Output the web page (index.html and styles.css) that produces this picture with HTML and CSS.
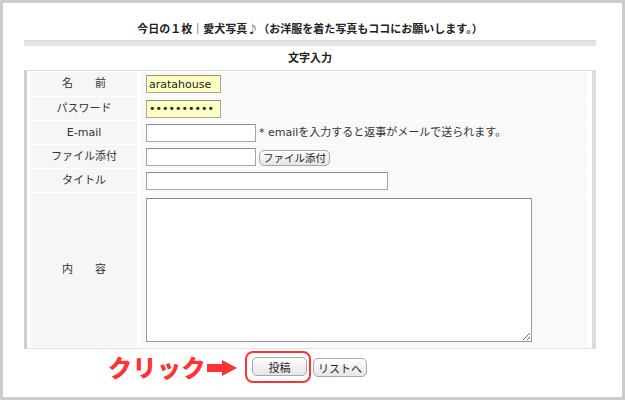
FILE: index.html
```html
<!DOCTYPE html>
<html lang="ja">
<head>
<meta charset="utf-8">
<title>文字入力</title>
<link rel="stylesheet" href="styles.css">
</head>
<body>
<div class="frame">
  <div class="content">
    <h1 class="title">今日の１枚｜愛犬写真♪（お洋服を着た写真もココにお願いします。）</h1>
    <div class="bar"></div>
    <h2 class="subtitle">文字入力</h2>
    <div class="form">
      <div class="row r1">
        <div class="label">名　　前</div>
        <div class="field"><input class="inp yellow w75" type="text" value="aratahouse"></div>
      </div>
      <div class="row">
        <div class="label">パスワード</div>
        <div class="field"><input class="inp yellow w75" type="password" value="aratahous1"></div>
      </div>
      <div class="row">
        <div class="label">E-mail</div>
        <div class="field"><input class="inp w110" type="text"><span class="note">* emailを入力すると返事がメールで送られます。</span></div>
      </div>
      <div class="row">
        <div class="label">ファイル添付</div>
        <div class="field"><input class="inp w110" type="text"><button class="btn small" type="button">ファイル添付</button></div>
      </div>
      <div class="row">
        <div class="label">タイトル</div>
        <div class="field"><input class="inp w242" type="text"></div>
      </div>
      <div class="row big">
        <div class="label">内　　容</div>
        <div class="field top"><textarea class="area"></textarea></div>
      </div>
    </div>
    <div class="actions">
      <span class="click">クリック</span>
      <svg class="arrow" width="30" height="16" viewBox="0 0 30 16"><path d="M0 4 H15 V0 L30 8 L15 16 V12 H0 Z" fill="#ff3333"/></svg>
      <span class="highlight"><button class="btn post" type="button">投稿</button></span>
      <button class="btn list" type="button">リストへ</button>
    </div>
  </div>
</div>
</body>
</html>
```
FILE: styles.css
```css
html, body {
  margin: 0;
  padding: 0;
  background: #fff;
}
body {
  font-family: "DejaVu Sans", "Noto Sans CJK JP", sans-serif;
  font-size: 11px;
  color: #333;
}
.frame {
  box-sizing: border-box;
  width: 625px;
  height: 400px;
  border: 3px solid #cccccc;
  background: #fff;
  overflow: hidden;
}
.content {
  margin-left: 21px;
  width: 572px;
}
.title {
  margin: 0;
  padding-top: 18px;
  font-size: 11px;
  line-height: 14px;
  font-weight: bold;
  color: #222;
  text-align: center;
  font-family: "Noto Sans CJK JP", sans-serif;
}
.bar {
  margin-top: 5px;
  height: 6px;
  background: #e4e4e4;
  border-top: 1px solid #dadada;
  box-sizing: border-box;
}
.subtitle {
  margin: 4px 0 0;
  font-size: 11px;
  line-height: 14px;
  font-weight: bold;
  color: #222;
  text-align: center;
  font-family: "Noto Sans CJK JP", sans-serif;
}
.form {
  margin-top: 6px;
  display: flex;
  flex-direction: column;
  gap: 1px;
  padding: 1px 5px 1px 4px;
  border-top: 1px solid #e0e0e0;
  border-left: 3px solid #cfcfcf;
  border-right: 4px solid #dcdcdc;
  border-bottom: 1px solid #e0e0e0;
}
.row {
  display: grid;
  grid-template-columns: 106px 1fr;
  column-gap: 4px;
  height: 23px;
}
.row.r1 { height: 24px; }
.row.big { height: 154px; }
.label {
  background: #f6f6f6;
  display: flex;
  align-items: center;
  justify-content: center;
  color: #333;
  line-height: 14px;
}
.field {
  background: #f9f9f9;
  display: flex;
  align-items: center;
  padding-left: 5px;
  gap: 3px;
}
.field.top {
  align-items: flex-start;
  padding-top: 5px;
}
.inp {
  box-sizing: border-box;
  height: 18px;
  margin: 0;
  padding: 0 2px;
  border: 1px solid #a5a5a5;
  border-top-color: #8e8e8e;
  background: #fff;
  font-family: "DejaVu Sans", "Noto Sans CJK JP", sans-serif;
  font-size: 11px;
  color: #222;
  outline: none;
}
.inp.yellow { background: #ffffc2; }
.w75 { width: 75px; }
.w110 { width: 110px; }
.w242 { width: 242px; }
.note {
  color: #333;
  line-height: 14px;
}
.area {
  box-sizing: border-box;
  width: 386px;
  height: 144px;
  margin: 0;
  border: 1px solid #9a9a9a;
  border-top-color: #888;
  background: #fff;
  outline: none;
}
.btn {
  box-sizing: border-box;
  margin: 0;
  padding: 0;
  height: 19px;
  border: 1px solid #a8a8a8;
  border-radius: 5px;
  background: linear-gradient(#ffffff, #f1f1f1 50%, #e6e6e6);
  font-family: "Noto Sans CJK JP", sans-serif;
  font-size: 11px;
  line-height: 16px;
  color: #222;
}
.btn.small {
  width: 71px;
  height: 16px;
  line-height: 13px;
  margin-top: 2px;
  font-size: 10.5px;
}
.btn.post { width: 55px; }
.btn.list { width: 54px; margin-left: 2px; margin-top: 7px; }
.actions {
  display: flex;
  align-items: flex-start;
  margin-top: 2px;
  padding-left: 84px;
}
.click {
  font-family: "Noto Sans CJK JP", sans-serif;
  font-weight: 900;
  font-size: 24px;
  line-height: 28px;
  color: #ff3333;
  margin-top: 2px;
  letter-spacing: 0.5px;
}
.arrow {
  margin-top: 9px;
  margin-left: 1px;
}
.highlight {
  display: block;
  margin-left: 8px;
  width: 66px;
  height: 32px;
  box-sizing: border-box;
  border: 2px solid #ff3333;
  border-radius: 8px;
  padding: 4px 2px 0 5px;
}
```
